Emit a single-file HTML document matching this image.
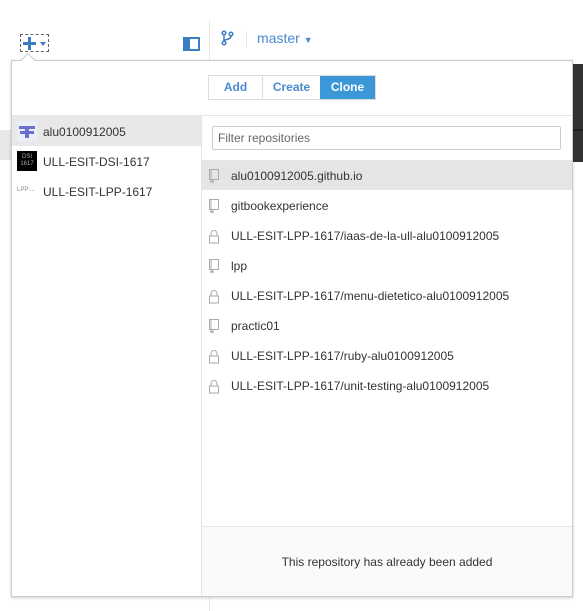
<!DOCTYPE html>
<html><head><style>
*{box-sizing:border-box;margin:0;padding:0}
body{width:583px;height:611px;background:#fff;font-family:"Liberation Sans",sans-serif;font-size:12px;color:#333;position:relative;overflow:hidden}
.abs{position:absolute}
.row{position:absolute;height:30px;line-height:30px;font-size:12px;color:#333}
.it{height:30px;display:flex;align-items:center;padding-top:1px}
.it span{margin-left:10px}
</style></head><body>
<div class="abs" style="left:0;top:130px;width:12px;height:30px;background:#e8e8e8"></div>
<div class="abs" style="left:572px;top:64px;width:11px;height:98px;background:#333"></div>
<div class="abs" style="left:572px;top:129px;width:11px;height:2px;background:#222"></div>
<div class="abs" style="left:209px;top:20px;width:1px;height:40px;background:#e5e5e5"></div>
<div class="abs" style="left:209px;top:596px;width:1px;height:15px;background:#e5e5e5"></div>
<div class="abs" style="left:20px;top:34px;width:29px;height:18px;border:1px dashed #666"></div>
<div class="abs" style="left:23px;top:42px;width:13px;height:3px;background:#3b7dc4"></div>
<div class="abs" style="left:28px;top:37px;width:3px;height:13px;background:#3b7dc4"></div>
<div class="abs" style="left:40px;top:42px;width:0;height:0;border-left:3px solid transparent;border-right:3px solid transparent;border-top:4px solid #3b7dc4"></div>
<div class="abs" style="left:183px;top:37px;width:17px;height:14px;background:#3b7dc4"></div>
<div class="abs" style="left:190px;top:39px;width:8px;height:10px;background:#fff"></div>
<svg class="abs" style="left:221px;top:30px" width="14" height="16" viewBox="0 0 14 16"><g fill="none" stroke="#3b7dc4" stroke-width="1.5"><circle cx="3" cy="3" r="1.8"/><circle cx="3" cy="13" r="1.8"/><circle cx="10" cy="4" r="1.8"/><path d="M3 5v6M10 6c0 4-7 3-7 5"/></g></svg>
<div class="abs" style="left:246px;top:31px;width:1px;height:16px;background:#e5e5e5"></div>
<div class="abs" style="left:257px;top:30px;font-size:14px;color:#4a8bd0">master <span style="font-size:9px">▼</span></div>
<div class="abs" style="left:11px;top:60px;width:562px;height:537px;border:1px solid #ccc;background:#fff;box-shadow:0 1px 3px rgba(0,0,0,.2)"></div>
<div class="abs" style="left:23px;top:55px;width:10px;height:10px;background:#fff;border-left:1px solid #ccc;border-top:1px solid #ccc;transform:rotate(45deg)"></div>
<div class="abs" style="left:208px;top:75px;width:168px;height:25px;border:1px solid #ddd;display:flex;font-size:12px;font-weight:bold">
<div style="width:54px;text-align:center;line-height:23px;color:#4a8bd0;border-right:1px solid #ddd">Add</div>
<div style="width:57px;text-align:center;line-height:23px;color:#4a8bd0">Create</div>
<div style="flex:1;text-align:center;line-height:23px;color:#fff;background:#3b97d8">Clone</div>
</div>
<div class="abs" style="left:12px;top:115px;width:560px;height:1px;background:#e5e5e5"></div>
<div class="abs" style="left:201px;top:116px;width:1px;height:480px;background:#e5e5e5"></div>
<div class="row" style="left:12px;top:116px;width:189px;background:#e8e8e8"></div>
<div class="abs" style="left:17px;top:121px;width:20px;height:20px;background:#eceef8"></div>
<div class="abs" style="left:19px;top:126px;width:16px;height:3px;background:#6a6fd0"></div>
<div class="abs" style="left:25px;top:126px;width:4px;height:12px;background:#6a6fd0"></div>
<div class="abs" style="left:20px;top:131px;width:14px;height:3px;background:#6a6fd0"></div>
<div class="row" style="left:43px;top:117px">alu0100912005</div>
<div class="abs" style="left:17px;top:151px;width:20px;height:20px;background:#000;color:#aaa;font-size:6px;line-height:7px;text-align:center;padding-top:3px">DSI<br>1617</div>
<div class="row" style="left:43px;top:147px">ULL-ESIT-DSI-1617</div>
<div class="abs" style="left:17px;top:187px;font-size:6px;color:#888">LPP ...</div>
<div class="row" style="left:43px;top:177px">ULL-ESIT-LPP-1617</div>
<div class="abs" style="left:212px;top:126px;width:349px;height:24px;border:1px solid #ccc;border-radius:2px;padding-left:5px;line-height:22px;color:#666">Filter repositories</div>
<div class="row" style="left:202px;top:160px;width:370px;background:#e5e5e5"></div>
<div class="abs" style="left:202px;top:526px;width:370px;height:70px;background:#fafafa;border-top:1px solid #e5e5e5"></div>
<div class="abs" style="left:202px;top:555px;width:370px;text-align:center;font-size:12px;color:#333">This repository has already been added</div>
<svg width="0" height="0" style="position:absolute"><defs>
<g id="bk"><path d="M2.5 1.5h9v10h-9zM4 1.5v10M4 11.5v3l1-1 1 1v-3" fill="none" stroke="#aaa"/></g>
<g id="lk"><path d="M4 8V5.5a3 3 0 0 1 6 0V8M2.5 8h9v7h-9z" fill="none" stroke="#aaa"/></g>
</defs></svg>
<div style="position:absolute;left:207px;top:160px">
<div class="it"><svg width="14" height="16"><use href="#bk"/></svg><span>alu0100912005.github.io</span></div>
<div class="it"><svg width="14" height="16"><use href="#bk"/></svg><span>gitbookexperience</span></div>
<div class="it"><svg width="14" height="16"><use href="#lk"/></svg><span>ULL-ESIT-LPP-1617/iaas-de-la-ull-alu0100912005</span></div>
<div class="it"><svg width="14" height="16"><use href="#bk"/></svg><span>lpp</span></div>
<div class="it"><svg width="14" height="16"><use href="#lk"/></svg><span>ULL-ESIT-LPP-1617/menu-dietetico-alu0100912005</span></div>
<div class="it"><svg width="14" height="16"><use href="#bk"/></svg><span>practic01</span></div>
<div class="it"><svg width="14" height="16"><use href="#lk"/></svg><span>ULL-ESIT-LPP-1617/ruby-alu0100912005</span></div>
<div class="it"><svg width="14" height="16"><use href="#lk"/></svg><span>ULL-ESIT-LPP-1617/unit-testing-alu0100912005</span></div>
</div>
</body></html>
